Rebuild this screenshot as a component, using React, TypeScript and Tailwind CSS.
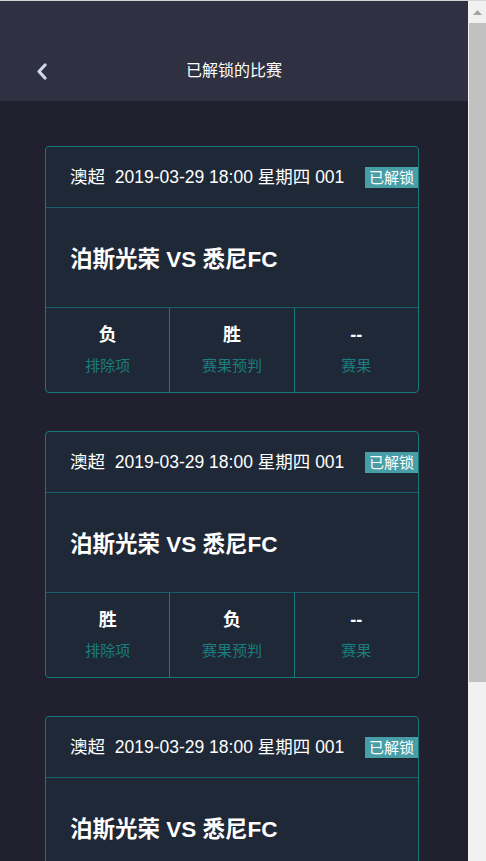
import { ReactNode } from 'react';

interface Match {
  league: string;
  time: string;
  home: string;
  away: string;
  exclude: string;
  predict: string;
  result: string;
}

const matches: Match[] = [
  { league: '澳超', time: '2019-03-29 18:00 星期四 001', home: '泊斯光荣', away: '悉尼FC', exclude: '负', predict: '胜', result: '--' },
  { league: '澳超', time: '2019-03-29 18:00 星期四 001', home: '泊斯光荣', away: '悉尼FC', exclude: '胜', predict: '负', result: '--' },
  { league: '澳超', time: '2019-03-29 18:00 星期四 001', home: '泊斯光荣', away: '悉尼FC', exclude: '负', predict: '胜', result: '--' },
];

function Cell({ value, label, last }: { value: string; label: string; last?: boolean }) {
  return (
    <div className={`flex-1 flex flex-col items-center pt-[16px] ${last ? '' : 'border-r border-[#17777b]'}`}>
      <span className="text-[18px] font-bold text-white leading-[22px]">{value}</span>
      <span className="mt-[10px] text-[15px] text-[#1b7c7e] leading-[20px]">{label}</span>
    </div>
  );
}

function MatchCard({ m }: { m: Match }) {
  return (
    <div className="w-[374px] shrink-0 rounded-[4px] border border-[#17777b] bg-[#1f2836] overflow-hidden">
      <div className="h-[61px] flex items-center pl-[24px] border-b border-[#175e66]">
        <span className="text-[17.5px] text-white whitespace-nowrap">
          {m.league}&nbsp;&nbsp;{m.time}
        </span>
        <span className="ml-auto shrink-0 h-[21px] px-[4px] bg-[#489ea6] text-white text-[15px] leading-[21px]">已解锁</span>
      </div>
      <div className="h-[100px] flex items-center pl-[24px] pt-[4px] border-b border-[#175e66]">
        <span className="text-[22.5px] font-bold text-white">
          {m.home} VS {m.away}
        </span>
      </div>
      <div className="h-[84px] flex">
        <Cell value={m.exclude} label="排除项" />
        <Cell value={m.predict} label="赛果预判" />
        <Cell value={m.result} label="赛果" last />
      </div>
    </div>
  );
}

function Scrollbar(): ReactNode {
  return (
    <div className="w-[18px] shrink-0 flex flex-col bg-[#f1f1f1]">
      <div className="h-[22px] flex items-center justify-center">
        <svg width="9" height="5" viewBox="0 0 9 5">
          <path d="M4.5 0 L9 5 L0 5 Z" fill="#a3a3a3" />
        </svg>
      </div>
      <div className="h-[659px] ml-[1px] bg-[#c1c1c1]" />
    </div>
  );
}

export default function App() {
  return (
    <div
      className="w-[486px] h-[861px] overflow-hidden flex flex-col bg-[#20202e]"
      style={{ fontFamily: '"Liberation Sans", "Noto Sans CJK SC", sans-serif' }}
    >
      <div className="h-px bg-[#d4d4d4] shrink-0" />
      <div className="flex flex-1 min-h-0">
        <div className="flex-1 flex flex-col min-w-0">
          <header className="h-[100px] shrink-0 bg-[#2f3142] pt-[51px]">
            <div className="relative h-[38px] flex items-center justify-center">
              <svg className="absolute left-[35px] top-[11px]" width="13" height="17" viewBox="0 0 13 17">
                <path d="M10 2 L4 8.5 L10 15" fill="none" stroke="#cdd6ea" strokeWidth="3.2" strokeLinecap="round" strokeLinejoin="round" />
              </svg>
              <span className="text-[16px] text-white">已解锁的比赛</span>
            </div>
          </header>
          <main className="flex-1 flex flex-col gap-[38px] pl-[45px] pt-[45px] bg-[#20202e] mr-[1px]">
            {matches.map((m, i) => (
              <MatchCard key={i} m={m} />
            ))}
          </main>
        </div>
        <Scrollbar />
      </div>
    </div>
  );
}
